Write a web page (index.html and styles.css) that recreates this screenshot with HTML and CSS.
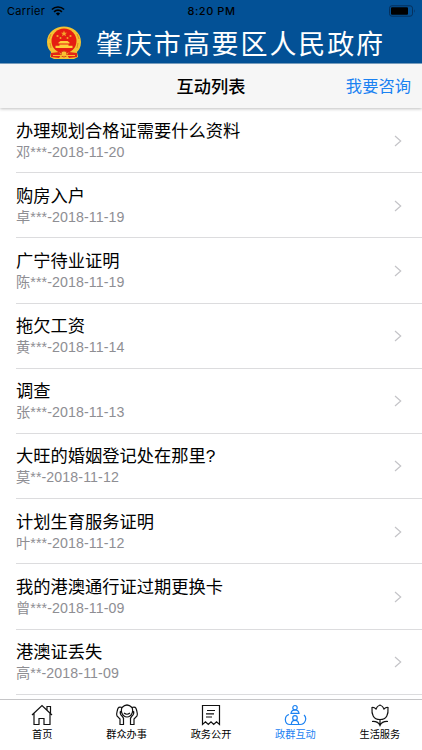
FILE: index.html
```
<!DOCTYPE html>
<html lang="zh-CN">
<head>
    <meta charset="UTF-8">
    <meta name="viewport" content="width=device-width, initial-scale=1.0">
    <title>互动列表</title>
    <link rel="stylesheet" href="styles.css">
</head>
<body>
    <svg width="0" height="0" class="defs">
        <symbol id="chevron" viewBox="0 0 8 12">
            <path d="M1 1l5.7 5L1 11" fill="none" stroke="#c4c4c8" stroke-width="1.2"/>
        </symbol>
    </svg>
    <header class="banner">
        <div class="status-bar">
            <div class="carrier">
                <span>Carrier</span>
                <svg width="14" height="10" viewBox="0 0 14 10">
                    <path d="M.9 3.5a8.7 8.7 0 0 1 12.2 0M3.1 5.8a5.6 5.6 0 0 1 7.8 0" fill="none" stroke="#000" stroke-width="1.7"/>
                    <path d="M4.9 7.6a3 3 0 0 1 4.2 0L7 9.8z"/>
                </svg>
            </div>
            <div class="time">8:20 PM</div>
            <div class="battery">
                <svg width="27" height="12" viewBox="0 0 27 12">
                    <rect x=".5" y=".8" width="23" height="10.4" rx="2.4" fill="none" stroke="#06305c"/>
                    <rect x="2" y="2.3" width="17" height="7.4" rx="1"/>
                    <path d="M25 4.3q1.5 1.7 0 3.4z" fill="#06305c"/>
                </svg>
            </div>
        </div>
        <div class="brand">
            <svg class="emblem" width="36" height="34" viewBox="0 0 36 34">
                <path d="M18 .5C26 .5 35 6 35 16c0 5-2 8-4 10l1 5-4 2H8l-4-2 1-5c-2-2-4-5-4-10C1 6 10 .5 18 .5z" fill="#f3c331"/>
                <path d="M5 8l-2 5m1 4l1 5m26-14l2 5m-1 4l-1 5" stroke="#dd8b22" stroke-width="1"/>
                <circle cx="18" cy="15" r="12.5" fill="#e51d12"/>
                <path d="M18 4.5l.8 2.2h2.3l-1.8 1.4.7 2.2-2-1.3-2 1.3.7-2.2-1.8-1.4h2.3z" fill="#f5a52b"/>
                <g fill="#f5a52b">
                    <circle cx="11.5" cy="10" r="1.1"/>
                    <circle cx="24.5" cy="10" r="1.1"/>
                    <circle cx="14.5" cy="12" r="1"/>
                    <circle cx="21.5" cy="12" r="1"/>
                </g>
                <path d="M12.5 16.5l2-1.5h7l2 1.500v1h-11zM13.500 18.500h9v1.300h4V22h-17v-2.200h4z" fill="#ffcf3a"/>
                <path d="M5 27l8-1 2 3-2 3-8-1zM31 27l-8-1-2 3 2 3 8-1z" fill="#e22516"/>
                <circle cx="18" cy="28" r="3" fill="#f8c331" stroke="#d8491b"/>
                <path d="M7 29.500h22" stroke="#f8bd2b" fill="none"/>
            </svg>
            <h1>肇庆市高要区人民政府</h1>
        </div>
    </header>
    <div class="toolbar">
        <h2>互动列表</h2>
        <a class="ask">我要咨询</a>
    </div>
    <ul class="list">
        <li class="item">
            <div>
                <h3>办理规划合格证需要什么资料</h3>
                <p>邓***-2018-11-20</p>
            </div>
            <svg class="arrow"><use href="#chevron"/></svg>
        </li>
        <li class="item">
            <div>
                <h3>购房入户</h3>
                <p>卓***-2018-11-19</p>
            </div>
            <svg class="arrow"><use href="#chevron"/></svg>
        </li>
        <li class="item">
            <div>
                <h3>广宁待业证明</h3>
                <p>陈***-2018-11-19</p>
            </div>
            <svg class="arrow"><use href="#chevron"/></svg>
        </li>
        <li class="item">
            <div>
                <h3>拖欠工资</h3>
                <p>黄***-2018-11-14</p>
            </div>
            <svg class="arrow"><use href="#chevron"/></svg>
        </li>
        <li class="item">
            <div>
                <h3>调查</h3>
                <p>张***-2018-11-13</p>
            </div>
            <svg class="arrow"><use href="#chevron"/></svg>
        </li>
        <li class="item">
            <div>
                <h3>大旺的婚姻登记处在那里?</h3>
                <p>莫**-2018-11-12</p>
            </div>
            <svg class="arrow"><use href="#chevron"/></svg>
        </li>
        <li class="item">
            <div>
                <h3>计划生育服务证明</h3>
                <p>叶***-2018-11-12</p>
            </div>
            <svg class="arrow"><use href="#chevron"/></svg>
        </li>
        <li class="item">
            <div>
                <h3>我的港澳通行证过期更换卡</h3>
                <p>曾***-2018-11-09</p>
            </div>
            <svg class="arrow"><use href="#chevron"/></svg>
        </li>
        <li class="item">
            <div>
                <h3>港澳证丢失</h3>
                <p>高**-2018-11-09</p>
            </div>
            <svg class="arrow"><use href="#chevron"/></svg>
        </li>
    </ul>
    <nav class="tabs">
        <a class="tab">
            <svg width="24" height="24" viewBox="0 0 24 24">
                <path d="M2 12L12 2.5 22 12M4 10.5V21.5h5V15.5h5v6h6V10.5M17 7V3.5h3.500v7"/>
            </svg>
            <span>首页</span>
        </a>
        <a class="tab">
            <svg width="24" height="24" viewBox="0 0 24 24">
                <path d="M7 4.500Q12-.5 17 4.500M7 4.500C5.500 8 7 14 12 14s6.500-6 5-9.500M9 10q3 2.500 6 0"/>
                <path d="M7 4.500Q3 3 2.500 7C2 9 1 11 2 13l3 3v5.500h3.500V17q.5-2-1.500-4-2.500-2-1.500-5M17 4.500q4-1.500 4.500 2.500c.5 2 1.500 4 .5 6l-3 3v5.500h-3.500V17q-.5-2 1.500-4 2.500-2 1.500-5"/>
            </svg>
            <span>群众办事</span>
        </a>
        <a class="tab">
            <svg width="24" height="24" viewBox="0 0 24 24">
                <path d="M3.500 2.500h17v19l-3-2.700-2.800 2.700-2.700-2.700-2.700 2.700-2.800-2.700-3 2.700zM8 7.500h8M7 10.800h8M7 14h6"/>
            </svg>
            <span>政务公开</span>
        </a>
        <a class="tab active">
            <svg width="24" height="24" viewBox="0 0 24 24">
                <circle cx="12" cy="4.700" r="2.200"/>
                <path d="M8 10.300q.5-3.400 4-3.400t4 3.400zM6 11.500c-5 1.500-5 10 1 10h10c6 0 7-7 4-9.500M8.300 21.200q.3-3.900 3.700-3.900t3.700 3.900"/>
                <circle cx="12" cy="15" r="2.300"/>
            </svg>
            <span>政群互动</span>
        </a>
        <a class="tab">
            <svg width="24" height="24" viewBox="0 0 24 24">
                <path d="M4 4.500q2-.5 4 1.500 1-3 4-4 3 1 4 4 2-2 4-1.500c.5 6.500-1 12-8 12S3.500 11 4 4.500zM12 16.500v6M4 18.500q6-.5 8 4 2-4.500 8-4"/>
            </svg>
            <span>生活服务</span>
        </a>
    </nav>
</body>
</html>
```
FILE: styles.css
```
* {
    box-sizing: border-box;
}
body {
    font-family: "Liberation Sans", "Noto Sans CJK SC", sans-serif;
    background-color: white;
    display: flex;
    flex-direction: column;
    height: 100vh;
    margin: 0;
    overflow: hidden;
}
h1, h2, h3, p, ul {
    margin: 0;
    padding: 0;
}
svg {
    display: block;
    flex-shrink: 0;
}
.defs {
    display: none;
}
.banner {
    height: 64px;
    flex-shrink: 0;
    background-color: #035196;
    border-bottom: 1px solid #7da4c5;
}
.status-bar {
    display: grid;
    grid-template-columns: 1fr auto 1fr;
    align-items: center;
    height: 22px;
    padding: 0 6px 0 7px;
    font-family: Inter, sans-serif;
    font-size: 11px;
    letter-spacing: 0.3px;
}
.carrier {
    display: flex;
    align-items: center;
    gap: 6px;
}
.time {
    font-weight: 500;
    letter-spacing: 0.55px;
}
.battery {
    display: flex;
    justify-content: flex-end;
}
.brand {
    display: flex;
    align-items: center;
    gap: 14px;
    height: 41px;
    padding-left: 46px;
}
h1 {
    color: white;
    font-size: 27px;
    font-weight: 400;
    letter-spacing: 1.9px;
    line-height: 36px;
    padding-top: 4px;
    white-space: nowrap;
}
.toolbar {
    display: grid;
    grid-template-columns: 1fr auto 1fr;
    align-items: center;
    height: 44px;
    flex-shrink: 0;
    padding: 0 11px 2px;
    background-color: #f6f6f6;
    box-shadow: 0 1px 3px rgba(0,0,0,0.25);
}
h2 {
    grid-column: 2;
    font-size: 17.2px;
    font-weight: 500;
}
.ask {
    justify-self: end;
    color: #1b82f2;
    font-size: 16.3px;
}
.list {
    flex: 1;
    min-height: 0;
    list-style: none;
    overflow: hidden;
}
.item {
    display: flex;
    justify-content: space-between;
    height: 65.2px;
    margin-left: 16px;
    padding: 10.5px 20px 0 0;
    border-bottom: 1px solid #dcdcde;
}
h3 {
    font-size: 17.25px;
    font-weight: 400;
    line-height: 25px;
}
p {
    color: #8e8e93;
    font-size: 14.2px;
    line-height: 18px;
    margin-top: -1px;
    letter-spacing: 0.1px;
}
.arrow {
    width: 8px;
    height: 12px;
    margin-top: 16px;
}
.tabs {
    display: flex;
    height: 51px;
    flex-shrink: 0;
    border-top: 1px solid #c5c5c7;
    background-color: white;
}
.tab {
    flex: 1;
    display: flex;
    flex-direction: column;
    align-items: center;
    padding-top: 3px;
    font-size: 10.2px;
    line-height: 15px;
}
.tab svg {
    fill: none;
    stroke: #111;
    stroke-width: 1.2;
}
.active {
    color: #1b82f2;
}
.active svg {
    stroke: #1b82f2;
}
```
